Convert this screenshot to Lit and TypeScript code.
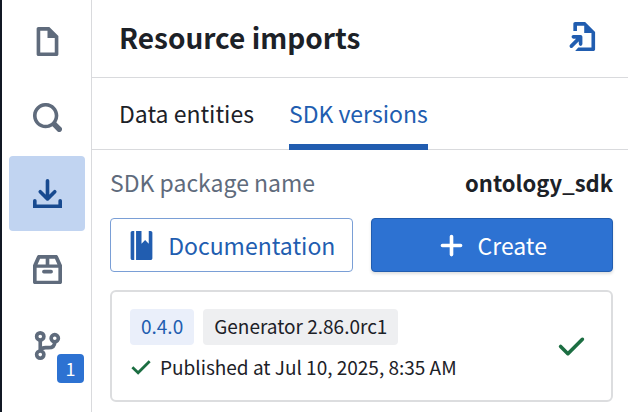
import { LitElement, html, css, svg } from "lit";
import { customElement, property, state } from "lit/decorators.js";

const ICONS: Record<string, unknown> = {
  document: svg`<path d="M9 0H3c-.55 0-1 .45-1 1v14c0 .55.45 1 1 1h10c.55 0 1-.45 1-1V5L9 0zm3 14H4V2h4v4h4v8z"/>`,
  search: svg`<path d="M15.55 13.43l-2.67-2.68a6.94 6.94 0 001.11-3.76c0-3.87-3.13-7-7-7s-7 3.13-7 7 3.13 7 7 7c1.39 0 2.68-.42 3.76-1.11l2.68 2.67a1.498 1.498 0 102.12-2.12zm-8.56-1.44c-2.76 0-5-2.24-5-5s2.24-5 5-5 5 2.24 5 5-2.24 5-5 5z"/>`,
  import: svg`<g fill="none" stroke="currentColor" stroke-width="2" stroke-linecap="round"><path d="M8 1v9.500M4 7l4 4 4-4" stroke-linejoin="round"/><path d="M1 12v3h14v-3"/></g>`,
  box: svg`<path fill-rule="evenodd" d="M3.200 0h9.600c.4 0 .75.25.9.6L16 5.600V15c0 .55-.45 1-1 1H1c-.55 0-1-.45-1-1V5.600L2.300.6c.15-.35.5-.6.9-.6zM3.900 2L2.500 5.200H7V2zM9 2v3.200h4.500L12.100 2zM2 7v7.200h12V7zM6 8.200h4a1 1 0 010 2H6a1 1 0 010-2z"/>`,
  branch: svg`<g fill="none" stroke="currentColor" stroke-width="2"><circle cx="4" cy="3" r="2"/><circle cx="12" cy="4" r="2"/><circle cx="4" cy="13" r="2"/><path d="M4 5v6M12 6c0 2.500-1.500 3.200-3.500 3.200H7C5.500 9.200 4.600 9.600 4 10.500"/></g>`,
  open: svg`<path d="M10 0H4.500c-.55 0-1 .45-1 1v4h2V2H9.500v4h4v8H6.200l-1.700 2H14.500c.55 0 1-.45 1-1V5.500L10 0z"/><path d="M3.500 8.200h4v4M7.200 8.500L2.400 13.300" fill="none" stroke="currentColor" stroke-width="2" stroke-linecap="round" stroke-linejoin="round"/>`,
  manual: svg`<path d="M3 0h1v16H3c-.55 0-1-.45-1-1V1c0-.55.45-1 1-1zM5 0h3v7l2-2 2 2V0h1c.55 0 1 .45 1 1v14c0 .55-.45 1-1 1H5z"/>`,
  plus: svg`<path d="M8 3v10M3 8h10" fill="none" stroke="currentColor" stroke-width="2" stroke-linecap="round"/>`,
  tick: svg`<path d="M14 3c-.28 0-.53.11-.71.29L6 10.590l-3.290-3.300a1.003 1.003 0 00-1.420 1.420l4 4c.18.18.43.29.71.29s.53-.11.71-.29l8-8A1.003 1.003 0 0014 3z"/>`,
  smallTick: svg`<path d="M1.700 8.200L5.900 12.200 14.300 3.800" fill="none" stroke="currentColor" stroke-width="2"/>`,
};

@customElement("ui-icon")
class UiIcon extends LitElement {
  static styles = css`
    :host { display: inline-flex; flex: none; width: 29px; height: 29px; }
    :host([small]) { width: 22px; height: 22px; }
    svg { width: 100%; height: 100%; fill: currentColor; }
  `;
  @property() name = "document";
  render() {
    return html`<svg viewBox="0 0 16 16" aria-hidden="true">${ICONS[this.name]}</svg>`;
  }
}

@customElement("side-nav")
class SideNav extends LitElement {
  static styles = css`
    :host {
      display: block;
      flex: none;
      padding: 4px 6px 4px 7px;
      border-left: 2px solid #111824;
      border-right: 1px solid #d9dadd;
    }
    nav { display: flex; flex-direction: column; gap: 1px; }
    .item {
      position: relative;
      display: flex;
      align-items: center;
      justify-content: center;
      width: 76px;
      height: 75px;
      padding: 0;
      border: 0;
      border-radius: 4px;
      background: none;
      color: #5f6b7c;
    }
    .active { background: #c1d4f1; color: #184a90; }
    .badge {
      position: absolute;
      right: 1px;
      bottom: 0;
      width: 27px;
      border-radius: 4px;
      background: #2d72d2;
      color: #fff;
      font: 18px/29px "Noto Sans CJK SC", sans-serif;
      text-align: center;
    }
  `;
  @state() private current = "import";
  private items = [
    { icon: "document", label: "Files", count: 0 },
    { icon: "search", label: "Search", count: 0 },
    { icon: "import", label: "Resource imports", count: 0 },
    { icon: "box", label: "Packages", count: 0 },
    { icon: "branch", label: "Branches", count: 1 },
  ];
  render() {
    return html`<nav>
      ${this.items.map(
        (i) => html`<button
          class="item ${i.icon === this.current ? "active" : ""}"
          aria-label=${i.label}
          @click=${() => (this.current = i.icon)}
        >
          <ui-icon name=${i.icon}></ui-icon>
          ${i.count ? html`<span class="badge">${i.count}</span>` : ""}
        </button>`
      )}
    </nav>`;
  }
}

@customElement("version-card")
class VersionCard extends LitElement {
  static styles = css`
    :host {
      display: flex;
      align-items: center;
      justify-content: space-between;
      padding: 17px 25px 17px 18px;
      border: 2px solid #dcdddf;
      border-radius: 6px;
      color: #1c2127;
      font-size: 19px;
      line-height: 32px;
    }
    .tags { display: flex; gap: 9px; }
    .tag { padding: 1px 11px 3px; border-radius: 4px; background: #eeeff1; }
    .version { background: #eaeffa; color: #215db0; }
    .published { display: flex; align-items: center; gap: 8px; padding-top: 6px; }
    ui-icon { color: #1c6e42; }
  `;
  @property() version = "";
  @property() generator = "";
  @property() published = "";
  render() {
    return html`
      <div>
        <div class="tags">
          <span class="tag version">${this.version}</span>
          <span class="tag">Generator ${this.generator}</span>
        </div>
        <div class="published">
          <ui-icon name="smallTick" small></ui-icon>
          <span>Published at ${this.published}</span>
        </div>
      </div>
      <ui-icon name="tick"></ui-icon>
    `;
  }
}

@customElement("app-root")
class AppRoot extends LitElement {
  static styles = css`
    :host {
      display: flex;
      min-height: 100vh;
      background: #fff;
      color: #1c2127;
      font-family: "Noto Sans CJK SC", sans-serif;
      font-size: 23px;
      line-height: 32px;
    }
    button { font: inherit; }
    main { flex: 1; min-width: 0; }
    header {
      display: flex;
      align-items: center;
      justify-content: space-between;
      height: 78px;
      padding: 0 32px 4px 27px;
      border-bottom: 1px solid #d9dadd;
      box-sizing: border-box;
    }
    h1 { margin: 0; font-size: 28px; line-height: 40px; font-weight: 700; }
    .open { display: flex; padding: 0; border: 0; background: none; color: #215db0; }
    .tabs { display: flex; gap: 35px; padding: 0 27px; border-bottom: 1px solid #d9dadd; }
    .tab {
      height: 72px;
      margin-bottom: -1px;
      padding: 4px 0 0;
      border: 0;
      border-bottom: 6px solid transparent;
      background: none;
      color: inherit;
      white-space: nowrap;
    }
    .selected { border-color: #215db0; color: #215db0; }
    .content { display: flex; flex-direction: column; gap: 18px; padding: 16px 15px 9px 18px; }
    .package { display: flex; justify-content: space-between; padding-bottom: 2px; }
    .label { color: #5f6b7c; }
    .package strong { font-size: 22px; font-weight: 700; }
    .actions { display: grid; grid-template-columns: 1fr 1fr; gap: 18px; }
    .action {
      display: flex;
      align-items: center;
      justify-content: center;
      gap: 12px;
      height: 54px;
      padding: 0;
      border: 1px solid #7a9fd6;
      border-radius: 4px;
      background: #fff;
      color: #215db0;
    }
    .primary {
      border-color: #215db0;
      background: #2d72d2;
      color: #fff;
      box-shadow: 0 2px 3px #11141822;
    }
  `;
  @state() private tab = "SDK versions";
  render() {
    return html`
      <side-nav></side-nav>
      <main>
        <header>
          <h1>Resource imports</h1>
          <button class="open" aria-label="Open document"><ui-icon name="open"></ui-icon></button>
        </header>
        <div class="tabs" role="tablist">
          ${["Data entities", "SDK versions"].map(
            (t) => html`<button
              role="tab"
              aria-selected=${t === this.tab}
              class="tab ${t === this.tab ? "selected" : ""}"
              @click=${() => (this.tab = t)}
            >${t}</button>`
          )}
        </div>
        <section class="content">
          <div class="package">
            <span class="label">SDK package name</span>
            <strong>ontology_sdk</strong>
          </div>
          <div class="actions">
            <button class="action"><ui-icon name="manual"></ui-icon>Documentation</button>
            <button class="action primary"><ui-icon name="plus"></ui-icon>Create</button>
          </div>
          <version-card
            version="0.4.0"
            generator="2.86.0rc1"
            published="Jul 10, 2025, 8:35 AM"
          ></version-card>
        </section>
      </main>
    `;
  }
}
